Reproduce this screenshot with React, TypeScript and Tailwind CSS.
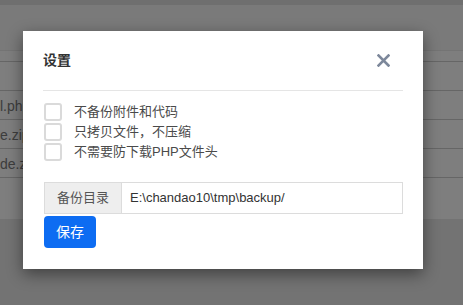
export default function App() {
  const files = ["l.php", "e.zip", "de.zip"];
  const opts = ["不备份附件和代码", "只拷贝文件，不压缩", "不需要防下载PHP文件头"];

  return (
    <div
      className="relative h-[305px] w-[463px] overflow-hidden bg-[#e6e6e6] text-[13px]"
      style={{ fontFamily: '"Liberation Sans", "Noto Sans CJK SC", sans-serif' }}
    >
      {/* page behind the dialog */}
      <div className="h-[5px] bg-[#dedede]" />
      <div className="h-[46px] border-b border-[#e8e8e8] bg-[#f4f4f4]" />
      <div className="bg-[#fcfcfc]">
        <div className="h-[11px] border-b border-[#cccccc]" />
        <div className="h-[29px] border-b border-[#cccccc]" />
        {files.map((f) => (
          <div key={f} className="flex h-[29px] items-center border-b border-[#cccccc] pt-[2px]">
            <span className="whitespace-nowrap text-[14px] text-[#7a7a7a]">{f}</span>
          </div>
        ))}
        <div className="h-[41px]" />
      </div>

      {/* backdrop */}
      <div className="absolute inset-0 bg-black/50">
        <div className="absolute left-[23px] top-[31px] w-[400px] bg-white px-5 pb-[21px] shadow-[0_5px_15px_rgba(0,0,0,0.45)]">
          <div className="flex h-[60px] items-center justify-between border-b border-[#e5e5e5]">
            <span className="text-[14px] font-bold text-[#333]">设置</span>
            <button className="mr-[13px] flex h-[14px] w-[14px] items-center justify-center">
              <svg width="13" height="13" viewBox="0 0 13 13">
                <path d="M1.5 1.5 L11.5 11.5 M11.5 1.5 L1.5 11.5" stroke="#7d889b" strokeWidth="2.6" strokeLinecap="square" />
              </svg>
            </button>
          </div>

          <div className="pt-[11px]">
            {opts.map((o) => (
              <label key={o} className="flex h-[20px] items-center">
                <span className="ml-[1px] h-[18px] w-[18px] rounded-[3px] border-2 border-[#dadada] bg-white" />
                <span className="ml-[12px] text-[13px] text-[#4a4a4a]">{o}</span>
              </label>
            ))}
          </div>

          <div className="mt-[20px] ml-[1px] flex h-[32px] w-[359px] border border-[#dcdcdc]">
            <span className="flex w-[77px] items-center justify-center border-r border-[#dcdcdc] bg-[#eeeeee] text-[13px] text-[#555]">
              备份目录
            </span>
            <span className="flex flex-1 items-center pl-[8px] text-[13px] text-[#333]">
              E:\chandao10\tmp\backup/
            </span>
          </div>

          <button className="mt-[2px] ml-[1px] flex h-[32px] w-[52px] items-center justify-center rounded-[4px] bg-[#0d6cf2] text-[14px] text-white">
            保存
          </button>
        </div>
      </div>
    </div>
  );
}
